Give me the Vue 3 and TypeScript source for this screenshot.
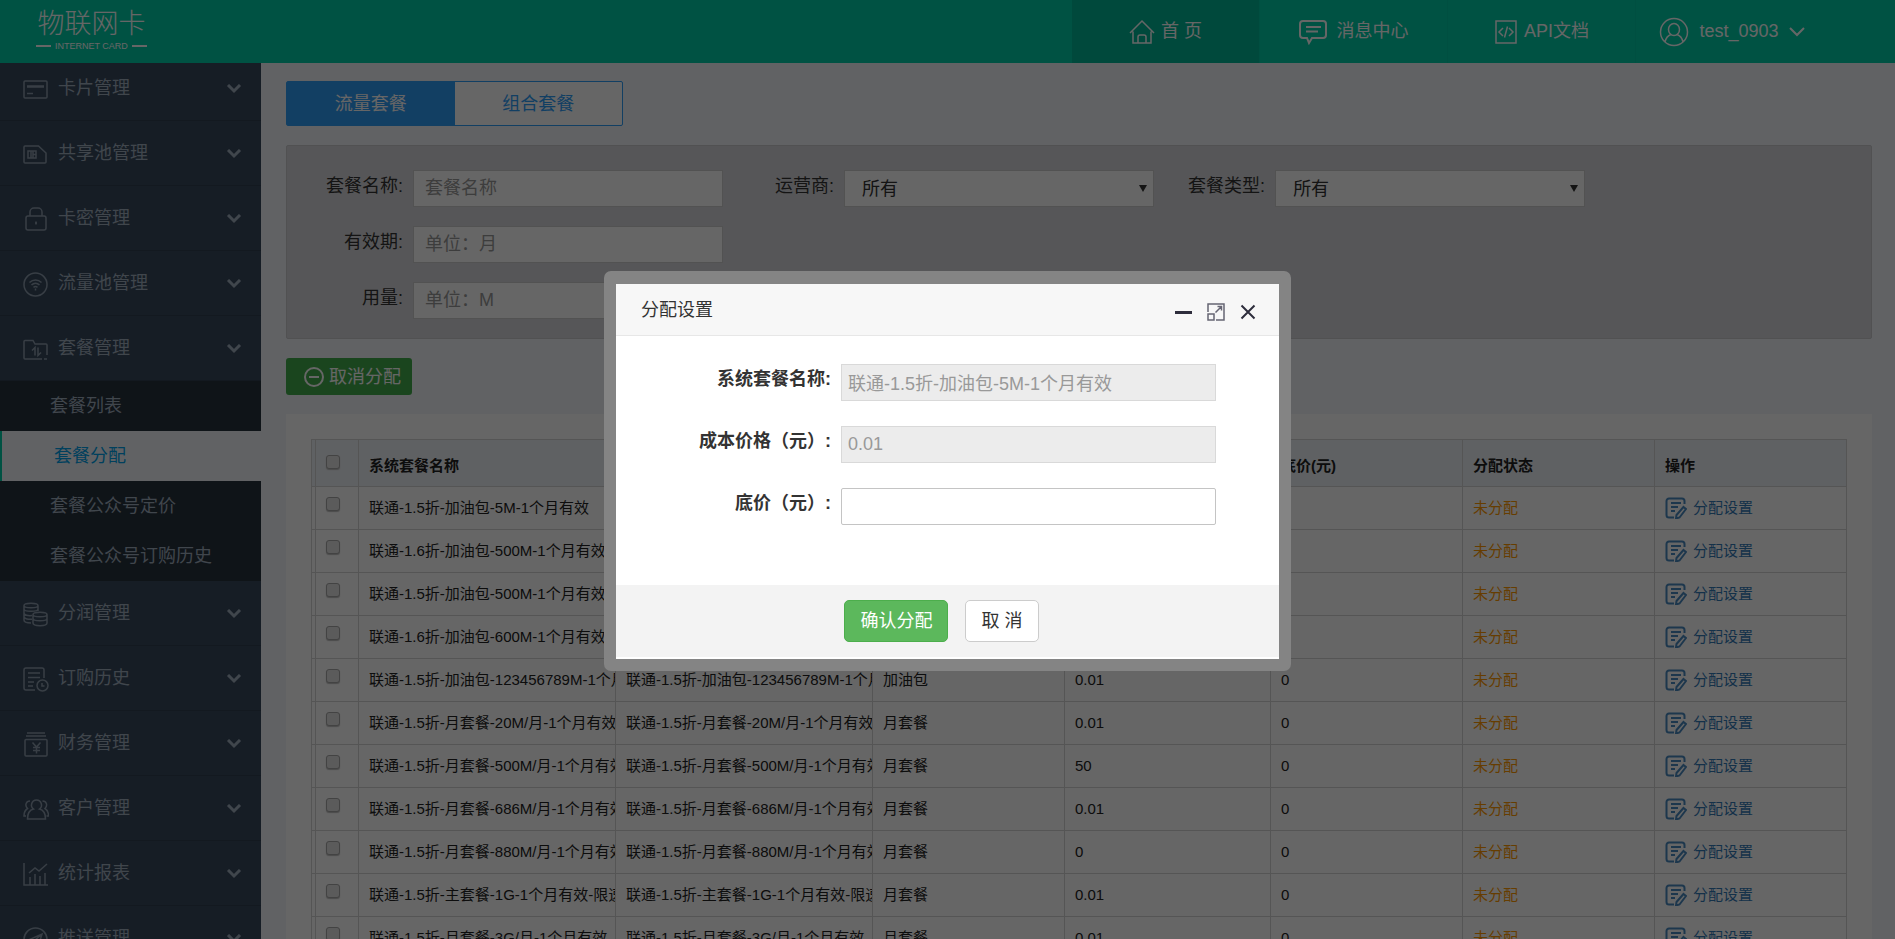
<script setup lang="ts">
import { ref } from 'vue'

interface MenuItem {
  label: string
  icon: string[]
  children?: string[]
}

interface PlanRow {
  name: string
  type: string
  cost: string
  floor: string
}

const menu: MenuItem[] = [
  { label: '卡片管理', icon: ['M3 5h21a1 1 0 0 1 1 1v15a1 1 0 0 1-1 1H3a1 1 0 0 1-1-1V6a1 1 0 0 1 1-1z', 'M5 10h17M5 11h17', 'M5 17.5h6'] },
  { label: '共享池管理', icon: ['M3 5h13.5l7.500 7v9a1 1 0 0 1-1 1H3a1 1 0 0 1-1-1V6a1 1 0 0 1 1-1z', 'M6 10h8v7H6z', 'M9 10v7M11 10v7M11 13.5h3'] },
  { label: '卡密管理', icon: ['M6 10h16a2 2 0 0 1 2 2v10a2 2 0 0 1-2 2H6a2 2 0 0 1-2-2V12a2 2 0 0 1 2-2z', 'M8 10V6a4 4 0 0 1 4-4h4a4 4 0 0 1 4 4v4', 'M14 15.5v3M13 17h2'] },
  { label: '流量池管理', icon: ['M13.5 2a11.5 11.5 0 1 0 0 23a11.5 11.5 0 1 0 0-23z', 'M7.5 11.5c3.5-3.3 8.5-3.3 12 0M9.5 14c2.3-2.2 5.7-2.2 8 0M11.5 16.3c1.2-1 2.8-1 4 0', 'M13.5 17.5v2'] },
  {
    label: '套餐管理',
    icon: ['M25 19V9a1 1 0 0 0-1-1H13l-2-3.500H3a1 1 0 0 0-1 1V22a1 1 0 0 0 1 1h17', 'M13 19.5v-8l-3 3M16 11.5v8l3-3', 'M22 23h3'],
    children: ['套餐列表', '套餐分配', '套餐公众号定价', '套餐公众号订购历史'],
  },
  { label: '分润管理', icon: ['M2 4.5C2 1.5 16 1.5 16 4.5S2 7.5 2 4.5zV19c0 2 3 3 7 3M16 4.5V10M2 8c0 3 14 3 14 0M2 12c0 2 4 3 8 2.5M2 15.5c0 2 3 3 8 2.8', 'M11 13.5c0-3 14-3 14 0s-14 3-14 0zV22c0 3.5 14 3.5 14 0v-8.5M11 17.5c0 3 14 3 14 0'] },
  { label: '订购历史', icon: ['M22 12V4a2 2 0 0 0-2-2H4a2 2 0 0 0-2 2v18a2 2 0 0 0 2 2h9', 'M6 7h12M6 11.5h12M6 16h6M6 20h5', 'M20.5 14a5.5 5.5 0 1 0 0 11a5.5 5.5 0 1 0 0-11z', 'M20 17v3h2.5'] },
  { label: '财务管理', icon: ['M5 2h18M4 5h20M4 8.5h20a1 1 0 0 1 1 1V24a1 1 0 0 1-1 1H4a1 1 0 0 1-1-1V9.5a1 1 0 0 1 1-1z', 'M10.5 11.5l4 4.5l4-4.5M14.5 16v6.5M11 16.5h7M11 19.5h7'] },
  { label: '客户管理', icon: ['M14.5 4a5 5 0 0 1 3 9c4 1 6 4.5 6 10h-18c0-5.5 2-9 6-10a5 5 0 0 1 3-9z', 'M8 5c-4 0-5.500 4.500-2.500 7.500C3 14 2 16.5 2 20h2M20.500 5c4 0 5.500 4.500 2.500 7.500C25.500 14 26.500 16.500 26.500 20h-2'] },
  { label: '统计报表', icon: ['M2 2v22h24', 'M8 24v-8M13 24V13M18 24v-9M23 24V12', 'M7 12l6-5l4 3l8-7'] },
  { label: '推送管理', icon: ['M13.5 2a11.5 11.5 0 1 0 0 23a11.5 11.5 0 1 0 0-23z', 'M6.5 14L20 8l-3 10l-5-3zM12 15l8-7'] },
]

const activeChild = ref('套餐分配')

const rows: PlanRow[] = [
  { name: '联通-1.5折-加油包-5M-1个月有效', type: '加油包', cost: '0.01', floor: '0' },
  { name: '联通-1.6折-加油包-500M-1个月有效', type: '加油包', cost: '0.01', floor: '0' },
  { name: '联通-1.5折-加油包-500M-1个月有效', type: '加油包', cost: '0.01', floor: '0' },
  { name: '联通-1.6折-加油包-600M-1个月有效', type: '加油包', cost: '0.01', floor: '0' },
  { name: '联通-1.5折-加油包-123456789M-1个月有效', type: '加油包', cost: '0.01', floor: '0' },
  { name: '联通-1.5折-月套餐-20M/月-1个月有效', type: '月套餐', cost: '0.01', floor: '0' },
  { name: '联通-1.5折-月套餐-500M/月-1个月有效', type: '月套餐', cost: '50', floor: '0' },
  { name: '联通-1.5折-月套餐-686M/月-1个月有效', type: '月套餐', cost: '0.01', floor: '0' },
  { name: '联通-1.5折-月套餐-880M/月-1个月有效', type: '月套餐', cost: '0', floor: '0' },
  { name: '联通-1.5折-主套餐-1G-1个月有效-限速', type: '月套餐', cost: '0.01', floor: '0' },
  { name: '联通-1.5折-月套餐-3G/月-1个月有效', type: '月套餐', cost: '0.01', floor: '0' },
]

const dialogName = ref('联通-1.5折-加油包-5M-1个月有效')
const dialogCost = ref('0.01')
const dialogPrice = ref('')
</script>

<template>
  <div class="app">
    <header class="topbar">
      <div class="logo">
        <span class="logo-main">物联网卡</span>
        <span class="logo-sub">INTERNET CARD</span>
      </div>
      <nav class="topnav">
        <a href="#" class="nav-item current">
          <svg width="26" height="26" viewBox="0 0 26 26"><path d="M1 14L13 2L25 14M4 12.5V24h18V12.5M9 24v-6a2 2 0 0 1 2-2h4a2 2 0 0 1 2 2v6" /></svg>
          <span>首 页</span>
        </a>
        <a href="#" class="nav-item wide">
          <svg width="28" height="26" viewBox="0 0 28 26"><path stroke-width="2" d="M4 2h20a3 3 0 0 1 3 3v11a3 3 0 0 1-3 3H13l-3 5l-2-5H4a3 3 0 0 1-3-3V5a3 3 0 0 1 3-3zM7 8h15M7 12.5h12" /></svg>
          <span>消息中心</span>
        </a>
        <a href="#" class="nav-item">
          <svg width="24" height="26" viewBox="0 0 24 26"><path d="M2 2h20v22H2zM9 9l-4 4l4 4M15 9l4 4l-4 4M13.5 7.5l-3 11" /></svg>
          <span>API文档</span>
        </a>
        <a href="#" class="nav-item user">
          <svg width="30" height="30" viewBox="0 0 30 30"><path d="M15 1.5a13.5 13.5 0 1 0 0 27a13.5 13.5 0 1 0 0-27zM15 6.5a5.5 6 0 1 0 0 12a5.5 6 0 1 0 0-12zM6 25c1-4.500 3-6.500 6-7.500M24 25c-1-4.500-3-6.500-6-7.500" /></svg>
          <span>test_0903</span>
          <svg width="16" height="10" viewBox="0 0 16 10"><path stroke-width="2" d="M1 1l7 7l7-7" /></svg>
        </a>
      </nav>
    </header>

    <div class="layout">
      <aside class="sidebar">
        <ul class="menu">
          <li v-for="item in menu" :key="item.label">
            <button type="button" class="menu-item">
              <svg class="menu-icon" width="27" height="26" viewBox="0 0 27 26">
                <path v-for="d in item.icon" :key="d" :d="d" />
              </svg>
              <span>{{ item.label }}</span>
              <svg class="menu-arrow" width="16" height="10" viewBox="0 0 16 10"><path d="M2 1l6 6l6-6" /></svg>
            </button>
            <ul v-if="item.children" class="submenu">
              <li v-for="child in item.children" :key="child">
                <a href="#" :class="['sub-item', { active: child === activeChild }]" @click.prevent="activeChild = child">{{ child }}</a>
              </li>
            </ul>
          </li>
        </ul>
      </aside>

      <main class="content">
        <div class="tabs">
          <button type="button" class="tab selected">流量套餐</button>
          <button type="button" class="tab">组合套餐</button>
        </div>

        <form class="filters" @submit.prevent>
          <div class="field">
            <label for="f-name">套餐名称:</label>
            <input id="f-name" type="text" placeholder="套餐名称" />
          </div>
          <div class="field">
            <label for="f-carrier">运营商:</label>
            <div class="select-box">
              <select id="f-carrier"><option>所有</option></select>
            </div>
          </div>
          <div class="field">
            <label for="f-type">套餐类型:</label>
            <div class="select-box">
              <select id="f-type"><option>所有</option></select>
            </div>
          </div>
          <div class="field first">
            <label for="f-period">有效期:</label>
            <input id="f-period" type="text" placeholder="单位：月" />
          </div>
          <div class="field first">
            <label for="f-usage">用量:</label>
            <input id="f-usage" type="text" placeholder="单位：M" />
          </div>
        </form>

        <button type="button" class="cancel-assign">
          <svg width="22" height="22" viewBox="0 0 22 22"><circle cx="11" cy="11" r="9" /><path d="M6 11h10" /></svg>
          <span>取消分配</span>
        </button>

        <section class="card">
          <table class="grid">
            <colgroup>
              <col class="c-check" /><col class="c-name" /><col class="c-name" /><col class="c-std" />
              <col class="c-cost" /><col class="c-std" /><col class="c-std" /><col class="c-std" />
            </colgroup>
            <thead>
              <tr>
                <th class="check"><input type="checkbox" aria-label="全选" /></th>
                <th>系统套餐名称</th>
                <th>套餐名称</th>
                <th>套餐类型</th>
                <th>成本价格(元)</th>
                <th>底价(元)</th>
                <th>分配状态</th>
                <th>操作</th>
              </tr>
            </thead>
            <tbody>
              <tr v-for="row in rows" :key="row.name">
                <td class="check"><input type="checkbox" :aria-label="row.name" /></td>
                <td>{{ row.name }}</td>
                <td>{{ row.name }}</td>
                <td>{{ row.type }}</td>
                <td>{{ row.cost }}</td>
                <td>{{ row.floor }}</td>
                <td class="status">未分配</td>
                <td>
                  <a href="#" class="action">
                    <svg width="22" height="22" viewBox="0 0 22 22"><path d="M9 20.5H4A2.5 2.5 0 0 1 1.5 18V4A2.5 2.5 0 0 1 4 1.5h13A2.5 2.5 0 0 1 19.5 4v3M6 6h10M6 10h7M6 14h4M18.5 10l2.5 2l-6.500 8.500l-3.500 1l.5-3.500z" /></svg>
                    <span>分配设置</span>
                  </a>
                </td>
              </tr>
            </tbody>
          </table>
        </section>
      </main>
    </div>

    <div class="overlay">
      <div class="dialog" role="dialog" aria-modal="true" aria-labelledby="dialog-title">
        <div class="dialog-head">
          <h2 id="dialog-title">分配设置</h2>
          <div class="dialog-tools">
            <button type="button" aria-label="最小化"><svg width="18" height="18" viewBox="0 0 18 18"><path stroke-width="3" d="M0 9.5h17" /></svg></button>
            <button type="button" aria-label="最大化"><svg class="thin" width="18" height="18" viewBox="0 0 18 18"><path d="M1 9V1h16v16H9M1 11h6v6H1zM8.5 9.5L14 4M10.5 3.5h4v4" /></svg></button>
            <button type="button" aria-label="关闭"><svg width="18" height="18" viewBox="0 0 18 18"><path stroke-width="2" d="M2.5 2.5l13 13M15.5 2.5l-13 13" /></svg></button>
          </div>
        </div>
        <div class="dialog-body">
          <div class="row">
            <label for="d-name">系统套餐名称:</label>
            <input id="d-name" v-model="dialogName" type="text" disabled />
          </div>
          <div class="row">
            <label for="d-cost">成本价格（元）:</label>
            <input id="d-cost" v-model="dialogCost" type="text" disabled />
          </div>
          <div class="row">
            <label for="d-price">底价（元）:</label>
            <input id="d-price" v-model="dialogPrice" type="text" />
          </div>
        </div>
        <div class="dialog-foot">
          <button type="button" class="btn primary">确认分配</button>
          <button type="button" class="btn">取 消</button>
        </div>
      </div>
    </div>
  </div>
</template>

<style>
body {
  margin: 0;
  overflow: hidden;
}
</style>

<style scoped>
.app,
.app * {
  box-sizing: border-box;
}

.app {
  display: flex;
  flex-direction: column;
  height: 100vh;
  overflow: hidden;
  font-family: "Liberation Sans", "Noto Sans CJK SC", sans-serif;
  font-size: 18px;
  line-height: 24px;
  color: #333;
}

button,
input,
select {
  font: inherit;
  color: inherit;
}

a {
  text-decoration: none;
  color: inherit;
}

svg {
  flex: none;
  fill: none;
  stroke: currentColor;
  stroke-width: 1.5;
}

.topbar {
  flex: none;
  display: flex;
  justify-content: space-between;
  height: 63px;
  padding: 0 67px 0 36px;
  background: #00cda9;
  color: #fff;
}

.logo {
  display: flex;
  flex-direction: column;
  align-items: center;
  padding-top: 8px;
}

.logo-main {
  font-size: 27px;
  font-weight: 300;
  line-height: 32px;
}

.logo-sub {
  display: flex;
  align-items: center;
  gap: 4px;
  font-size: 9px;
  line-height: 12px;
  white-space: nowrap;
}

.logo-sub::before,
.logo-sub::after {
  content: "";
  width: 15px;
  height: 2px;
  background: #fff;
}

.topnav {
  display: flex;
}

.nav-item {
  display: flex;
  align-items: center;
  justify-content: center;
  gap: 6px;
  width: 188px;
  border-right: 1px solid #00c5a2;
}

.nav-item span {
  padding-bottom: 2px;
}

.nav-item.current {
  background: #00b797;
}

.nav-item.wide {
  gap: 10px;
}

.nav-item.user {
  width: 192px;
  gap: 10px;
  border-right: 0;
}

.layout {
  flex: 1;
  display: flex;
  min-height: 0;
  overflow: hidden;
}

.sidebar {
  flex: none;
  width: 261px;
  overflow: hidden;
  background: #384a5e;
  color: #a0aebf;
}

.menu,
.submenu {
  margin: 0;
  padding: 0;
  list-style: none;
}

.menu {
  margin-top: -7px;
}

.menu-item {
  display: flex;
  align-items: center;
  gap: 9px;
  width: 100%;
  height: 65px;
  padding: 2px 19px 0 22px;
  border: 0;
  border-bottom: 1px solid #304052;
  background: none;
  text-align: left;
}

.menu-item span {
  padding-bottom: 2px;
}

.menu-icon {
  color: #8d9cad;
}

.menu-arrow {
  margin-left: auto;
  stroke-width: 3;
}

.submenu {
  background: #26323e;
}

.sub-item {
  display: block;
  height: 50px;
  padding-left: 50px;
  line-height: 50px;
}

.sub-item.active {
  border-left: 2px solid #00cda9;
  padding-left: 52px;
  background: #f3f6f9;
  color: #00a0e9;
}

.content {
  flex: 1;
  min-width: 0;
  padding: 18px 23px 0 25px;
  background: #f2f5f9;
}

.tabs {
  display: flex;
  width: 337px;
  height: 45px;
  margin-bottom: 19px;
  border: 1px solid #2f9df7;
  border-radius: 2px;
  background: #fff;
}

.tab {
  flex: 1;
  border: 0;
  background: none;
  color: #2f9df7;
}

.tab.selected {
  background: #2f9df7;
  color: #fff;
}

.filters {
  display: grid;
  grid-template-columns: repeat(3, 27.3%);
  row-gap: 19px;
  height: 194px;
  padding: 24px 0 0 5px;
  align-content: start;
  border: 1px solid #cacace;
  border-radius: 2px;
  background: #d7d7db;
}

.field {
  display: flex;
  gap: 10px;
}

.field.first {
  grid-column: 1;
}

.field label {
  flex: none;
  width: 111px;
  line-height: 32px;
  text-align: right;
}

.field input,
.select-box {
  flex: 1;
  min-width: 0;
  height: 37px;
  border: 1px solid #ccc;
  background: #fff;
}

.field input {
  padding: 0 11px;
}

.field input::placeholder {
  color: #999;
}

.select-box {
  display: flex;
  align-items: center;
  padding-right: 6px;
}

.select-box select {
  flex: 1;
  height: 35px;
  padding: 0 17px;
  border: 0;
  background: none;
  appearance: none;
}

.select-box::after {
  content: "";
  border: 4px solid transparent;
  border-top: 7px solid #333;
  border-bottom: 0;
}

.cancel-assign {
  display: flex;
  align-items: center;
  gap: 4px;
  height: 37px;
  margin: 19px 0;
  padding: 0 11px 0 17px;
  border: 0;
  border-radius: 3px;
  background: #43ad4c;
  color: #fff;
}

.cancel-assign svg {
  stroke-width: 2;
}

.card {
  padding: 25px 27px 25px 25px;
  background: #fff;
}

.grid {
  width: 100%;
  table-layout: fixed;
  border-collapse: collapse;
  font-size: 15px;
  line-height: 20px;
  color: #222;
}

.c-check {
  width: 47px;
}

.c-name {
  width: 257px;
}

.c-std {
  width: 192px;
}

.c-cost {
  width: 206px;
}

.grid th,
.grid td {
  height: 43px;
  padding: 0 0 0 10px;
  border: 1px solid #d5d5d5;
  overflow: hidden;
  white-space: nowrap;
  text-align: left;
}

.grid th {
  height: 47px;
  padding-top: 6px;
  background-color: #eef2f7;
}

.grid .check {
  padding: 0 0 8px 14px;
  background-image: linear-gradient(#d5d5d5, #d5d5d5);
  background-position: 3px 0;
  background-size: 1px 100%;
  background-repeat: no-repeat;
}

.grid th.check {
  padding-bottom: 2px;
}

.check input {
  display: block;
  width: 14px;
  height: 14px;
  margin: 0;
  border: 1px solid #a8a8a8;
  border-radius: 3px;
  background: #e4e4e4;
  box-shadow: 0 1px 1px #bbb;
  appearance: none;
}

.grid .status {
  color: #f90;
}

.action {
  display: flex;
  align-items: center;
  gap: 6px;
  color: #337ab7;
}

.action svg {
  color: #4a8ac0;
  stroke-width: 2;
}

.overlay {
  position: fixed;
  inset: 0;
  display: flex;
  align-items: center;
  justify-content: center;
  padding-top: 2px;
  background: rgba(0, 0, 0, 0.6);
}

.dialog {
  width: 687px;
  padding-bottom: 2px;
  border: 12px solid #848484;
  border-top-width: 13px;
  border-radius: 7px;
  background: #fff;
}

.dialog-head {
  display: flex;
  align-items: center;
  justify-content: space-between;
  height: 52px;
  padding: 2px 22px 0 25px;
  border-bottom: 1px solid #e7e7e7;
  background: #f7f7f7;
}

.dialog-head h2 {
  margin: 0;
  font-size: 18px;
  font-weight: 400;
}

.dialog-tools {
  display: flex;
  gap: 14px;
  padding-top: 3px;
}

.dialog-tools button {
  display: flex;
  padding: 0;
  border: 0;
  background: none;
  color: #2e2d3c;
}

.dialog-tools .thin {
  color: #666573;
}

.dialog-body {
  display: flex;
  flex-direction: column;
  gap: 25px;
  padding: 28px 63px 60px 25px;
}

.row {
  display: flex;
  gap: 10px;
}

.row label {
  flex: 1;
  font-weight: 700;
  line-height: 30px;
  text-align: right;
}

.row input {
  width: 375px;
  height: 37px;
  padding: 0 6px;
  border: 1px solid #c4c4c4;
  border-radius: 2px;
  background: #fff;
}

.row input:disabled {
  border-color: #d9d9d9;
  border-radius: 0;
  background: #ececec;
  color: #999;
}

.dialog-foot {
  display: flex;
  justify-content: center;
  gap: 17px;
  padding: 15px 12px 15px 0;
  background: #f3f3f3;
}

.btn {
  height: 42px;
  padding: 0 15px;
  border: 1px solid #ccc;
  border-radius: 5px;
  background: #fff;
}

.btn.primary {
  border-color: #4cae4c;
  background: #5cb85c;
  color: #fff;
}
</style>
